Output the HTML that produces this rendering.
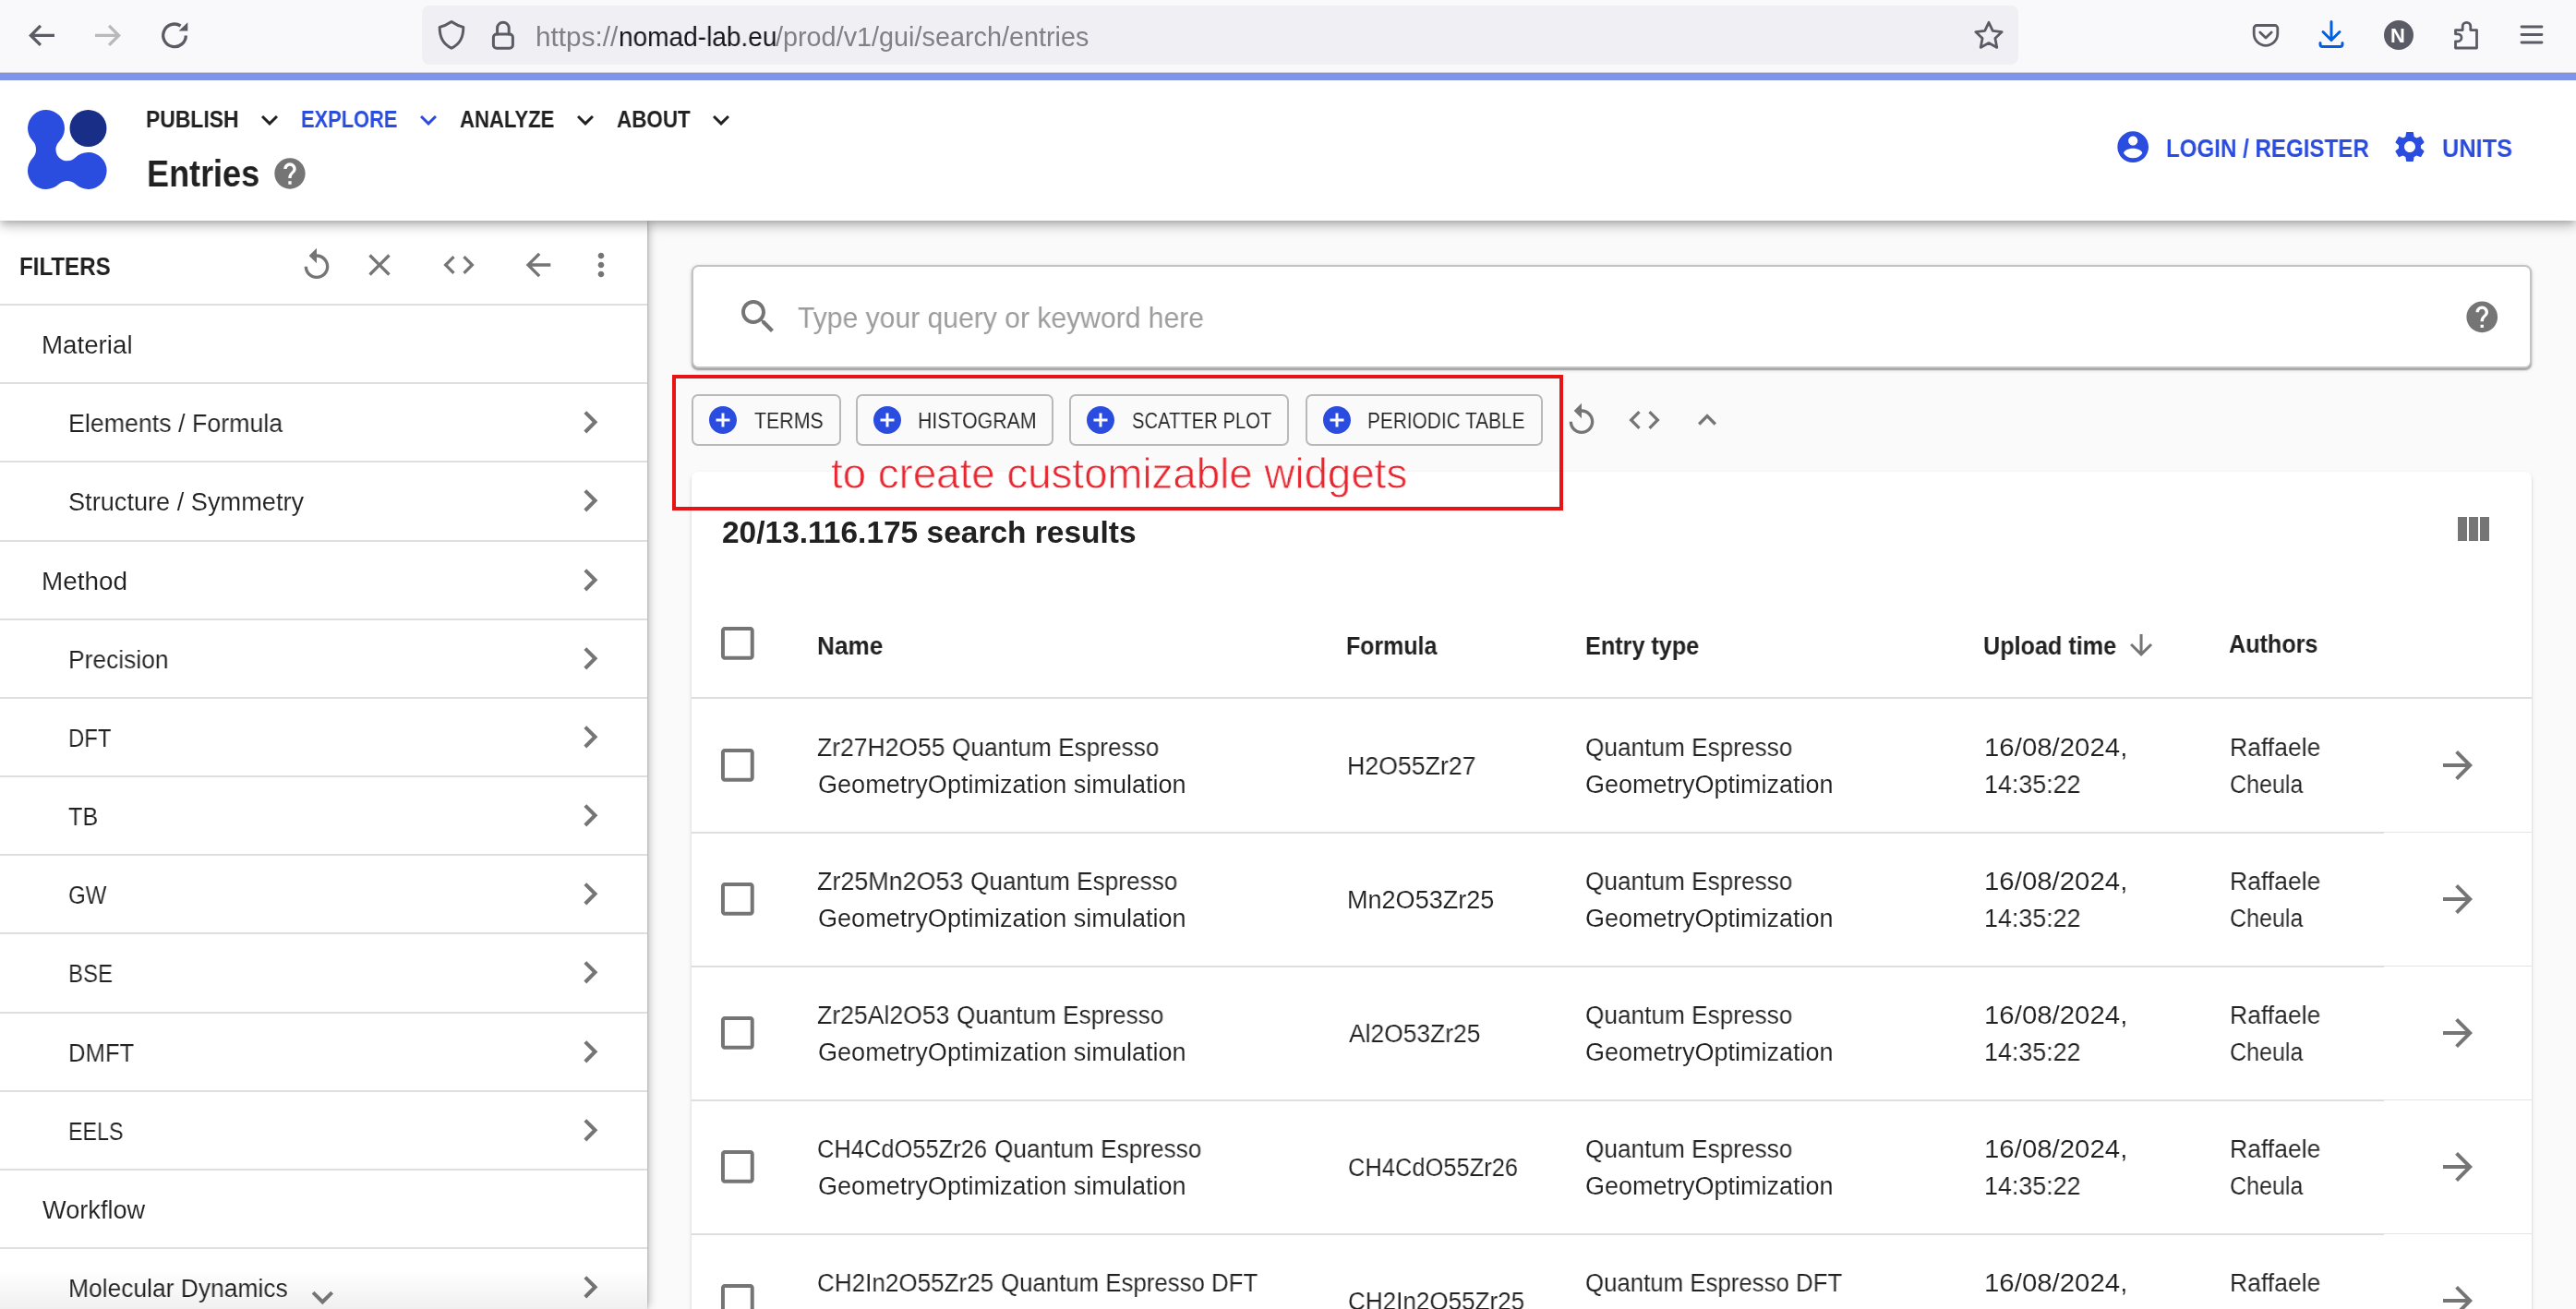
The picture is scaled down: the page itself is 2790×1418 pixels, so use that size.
<!DOCTYPE html>
<html lang="en"><head><meta charset="utf-8"><title>NOMAD - Entries</title>
<style>
html,body{margin:0;padding:0;background:#fafafa}
body{width:2790px;height:1418px;position:relative;overflow:hidden;font-family:"Liberation Sans", sans-serif}
main,aside,header,section,div,svg,span{position:absolute;display:block}
main,aside,header,section{left:0;top:0;width:0;height:0}
.t{white-space:pre;transform-origin:0 50%;will-change:transform}
.u{color:#15141a}
</style></head><body>
<main>
<div style="left:0px;top:0px;width:2790px;height:1418px;background:#fafafa"></div>
<div style="left:749px;top:511px;width:1993px;height:920px;background:#fff;border-radius:7px 7px 0 0;box-shadow:0 2px 2px -1px rgba(0,0,0,.18),0 2px 2px rgba(0,0,0,.12),0 2px 5px rgba(0,0,0,.1)"></div>
<span class="t" id="t0" style="left:781.87px;top:558px;font-size:32.6px;line-height:37px;color:#212121;font-weight:700;transform:scaleX(1.0276);">20/13.116.175 search results</span>
<svg style="left:2654.2px;top:550.2px" width="48" height="48" viewBox="0 0 24 24"><path fill="#757575" d="M10 18h5V5h-5v13zm-6 0h5V5H4v13zM16 5v13h5V5h-5z"/></svg>
<svg style="left:775.15px;top:673.15px" width="47.7" height="47.7" viewBox="0 0 24 24"><path fill="#757575" d="M19 5v14H5V5h14m0-2H5c-1.1 0-2 .9-2 2v14c0 1.1.9 2 2 2h14c1.1 0 2-.9 2-2V5c0-1.1-.9-2-2-2z"/></svg>
<span class="t" id="t1" style="left:884.88px;top:684px;font-size:27.2px;line-height:31px;color:#212121;font-weight:700;transform:scaleX(0.9620);">Name</span>
<span class="t" id="t2" style="left:1458.37px;top:684px;font-size:27.2px;line-height:31px;color:#212121;font-weight:700;transform:scaleX(0.9170);">Formula</span>
<span class="t" id="t3" style="left:1717.15px;top:684px;font-size:27.2px;line-height:31px;color:#212121;font-weight:700;transform:scaleX(0.9269);">Entry type</span>
<span class="t" id="t4" style="left:2147.85px;top:684px;font-size:27.2px;line-height:31px;color:#212121;font-weight:700;transform:scaleX(0.9261);">Upload time</span>
<svg style="left:2300.9px;top:681px" width="36.1" height="36.1" viewBox="0 0 24 24"><path fill="#757575" d="M20 12l-1.41-1.41L13 16.17V4h-2v12.17l-5.58-5.59L4 12l8 8 8-8z"/></svg>
<span class="t" id="t5" style="left:2413.97px;top:682px;font-size:27.2px;line-height:31px;color:#212121;font-weight:700;transform:scaleX(0.9255);">Authors</span>
<div style="left:749px;top:755px;width:1993px;height:2px;background:#dedede"></div>
<svg style="left:775.15px;top:805.15px" width="47.7" height="47.7" viewBox="0 0 24 24"><path fill="#757575" d="M19 5v14H5V5h14m0-2H5c-1.1 0-2 .9-2 2v14c0 1.1.9 2 2 2h14c1.1 0 2-.9 2-2V5c0-1.1-.9-2-2-2z"/></svg>
<span class="t" id="t6" style="left:885.02px;top:795px;font-size:27px;line-height:30px;color:#212121;transform:scaleX(0.9820);-webkit-text-stroke:0.12px #fff;">Zr27H2O55</span>
<span class="t" id="t7" style="left:1031.23px;top:795px;font-size:27px;line-height:30px;color:#212121;transform:scaleX(0.9712);-webkit-text-stroke:0.12px #fff;">Quantum Espresso</span>
<span class="t" id="t8" style="left:885.5px;top:835px;font-size:27px;line-height:30px;color:#212121;transform:scaleX(1.0025);-webkit-text-stroke:0.12px #fff;">GeometryOptimization simulation</span>
<span class="t" id="t9" style="left:1458.72px;top:815px;font-size:27px;line-height:30px;color:#212121;transform:scaleX(0.9891);-webkit-text-stroke:0.12px #fff;">H2O55Zr27</span>
<span class="t" id="t10" style="left:1717.23px;top:795px;font-size:27px;line-height:30px;color:#212121;transform:scaleX(0.9712);-webkit-text-stroke:0.12px #fff;">Quantum Espresso</span>
<span class="t" id="t11" style="left:1717.4px;top:835px;font-size:27px;line-height:30px;color:#212121;-webkit-text-stroke:0.12px #fff;">GeometryOptimization</span>
<span class="t" id="t12" style="left:2148.72px;top:795px;font-size:27px;line-height:30px;color:#212121;transform:scaleX(1.0891);-webkit-text-stroke:0.12px #fff;">16/08/2024,</span>
<span class="t" id="t13" style="left:2148.91px;top:835px;font-size:27px;line-height:30px;color:#212121;transform:scaleX(0.9951);-webkit-text-stroke:0.12px #fff;">14:35:22</span>
<span class="t" id="t14" style="left:2414.73px;top:795px;font-size:27px;line-height:30px;color:#212121;transform:scaleX(0.9835);-webkit-text-stroke:0.12px #fff;">Raffaele</span>
<span class="t" id="t15" style="left:2415.17px;top:835px;font-size:27px;line-height:30px;color:#212121;transform:scaleX(0.9286);-webkit-text-stroke:0.12px #fff;">Cheula</span>
<svg style="left:2638px;top:805px" width="48" height="48" viewBox="0 0 24 24"><path fill="#757575" d="M12 4l-1.41 1.41L16.17 11H4v2h12.17l-5.58 5.59L12 20l8-8z"/></svg>
<div style="left:749px;top:901px;width:1833px;height:2px;background:#dedede"></div>
<div style="left:2582px;top:901px;width:160px;height:1px;background:#e4e4e4"></div>
<svg style="left:775.15px;top:950.15px" width="47.7" height="47.7" viewBox="0 0 24 24"><path fill="#757575" d="M19 5v14H5V5h14m0-2H5c-1.1 0-2 .9-2 2v14c0 1.1.9 2 2 2h14c1.1 0 2-.9 2-2V5c0-1.1-.9-2-2-2z"/></svg>
<span class="t" id="t16" style="left:885px;top:940px;font-size:27px;line-height:30px;color:#212121;transform:scaleX(0.9955);-webkit-text-stroke:0.12px #fff;">Zr25Mn2O53</span>
<span class="t" id="t17" style="left:1051.03px;top:940px;font-size:27px;line-height:30px;color:#212121;transform:scaleX(0.9712);-webkit-text-stroke:0.12px #fff;">Quantum Espresso</span>
<span class="t" id="t18" style="left:885.5px;top:980px;font-size:27px;line-height:30px;color:#212121;transform:scaleX(1.0025);-webkit-text-stroke:0.12px #fff;">GeometryOptimization simulation</span>
<span class="t" id="t19" style="left:1458.7px;top:960px;font-size:27px;line-height:30px;color:#212121;transform:scaleX(1.0019);-webkit-text-stroke:0.12px #fff;">Mn2O53Zr25</span>
<span class="t" id="t20" style="left:1717.23px;top:940px;font-size:27px;line-height:30px;color:#212121;transform:scaleX(0.9712);-webkit-text-stroke:0.12px #fff;">Quantum Espresso</span>
<span class="t" id="t21" style="left:1717.4px;top:980px;font-size:27px;line-height:30px;color:#212121;-webkit-text-stroke:0.12px #fff;">GeometryOptimization</span>
<span class="t" id="t22" style="left:2148.72px;top:940px;font-size:27px;line-height:30px;color:#212121;transform:scaleX(1.0891);-webkit-text-stroke:0.12px #fff;">16/08/2024,</span>
<span class="t" id="t23" style="left:2148.91px;top:980px;font-size:27px;line-height:30px;color:#212121;transform:scaleX(0.9951);-webkit-text-stroke:0.12px #fff;">14:35:22</span>
<span class="t" id="t24" style="left:2414.73px;top:940px;font-size:27px;line-height:30px;color:#212121;transform:scaleX(0.9835);-webkit-text-stroke:0.12px #fff;">Raffaele</span>
<span class="t" id="t25" style="left:2415.17px;top:980px;font-size:27px;line-height:30px;color:#212121;transform:scaleX(0.9286);-webkit-text-stroke:0.12px #fff;">Cheula</span>
<svg style="left:2638px;top:950px" width="48" height="48" viewBox="0 0 24 24"><path fill="#757575" d="M12 4l-1.41 1.41L16.17 11H4v2h12.17l-5.58 5.59L12 20l8-8z"/></svg>
<div style="left:749px;top:1046px;width:1833px;height:2px;background:#dedede"></div>
<div style="left:2582px;top:1046px;width:160px;height:1px;background:#e4e4e4"></div>
<svg style="left:775.15px;top:1095.15px" width="47.7" height="47.7" viewBox="0 0 24 24"><path fill="#757575" d="M19 5v14H5V5h14m0-2H5c-1.1 0-2 .9-2 2v14c0 1.1.9 2 2 2h14c1.1 0 2-.9 2-2V5c0-1.1-.9-2-2-2z"/></svg>
<span class="t" id="t26" style="left:885.01px;top:1085px;font-size:27px;line-height:30px;color:#212121;transform:scaleX(0.9853);-webkit-text-stroke:0.12px #fff;">Zr25Al2O53</span>
<span class="t" id="t27" style="left:1035.63px;top:1085px;font-size:27px;line-height:30px;color:#212121;transform:scaleX(0.9712);-webkit-text-stroke:0.12px #fff;">Quantum Espresso</span>
<span class="t" id="t28" style="left:885.5px;top:1125px;font-size:27px;line-height:30px;color:#212121;transform:scaleX(1.0025);-webkit-text-stroke:0.12px #fff;">GeometryOptimization simulation</span>
<span class="t" id="t29" style="left:1460.7px;top:1105px;font-size:27px;line-height:30px;color:#212121;transform:scaleX(0.9785);-webkit-text-stroke:0.12px #fff;">Al2O53Zr25</span>
<span class="t" id="t30" style="left:1717.23px;top:1085px;font-size:27px;line-height:30px;color:#212121;transform:scaleX(0.9712);-webkit-text-stroke:0.12px #fff;">Quantum Espresso</span>
<span class="t" id="t31" style="left:1717.4px;top:1125px;font-size:27px;line-height:30px;color:#212121;-webkit-text-stroke:0.12px #fff;">GeometryOptimization</span>
<span class="t" id="t32" style="left:2148.72px;top:1085px;font-size:27px;line-height:30px;color:#212121;transform:scaleX(1.0891);-webkit-text-stroke:0.12px #fff;">16/08/2024,</span>
<span class="t" id="t33" style="left:2148.91px;top:1125px;font-size:27px;line-height:30px;color:#212121;transform:scaleX(0.9951);-webkit-text-stroke:0.12px #fff;">14:35:22</span>
<span class="t" id="t34" style="left:2414.73px;top:1085px;font-size:27px;line-height:30px;color:#212121;transform:scaleX(0.9835);-webkit-text-stroke:0.12px #fff;">Raffaele</span>
<span class="t" id="t35" style="left:2415.17px;top:1125px;font-size:27px;line-height:30px;color:#212121;transform:scaleX(0.9286);-webkit-text-stroke:0.12px #fff;">Cheula</span>
<svg style="left:2638px;top:1095px" width="48" height="48" viewBox="0 0 24 24"><path fill="#757575" d="M12 4l-1.41 1.41L16.17 11H4v2h12.17l-5.58 5.59L12 20l8-8z"/></svg>
<div style="left:749px;top:1191px;width:1833px;height:2px;background:#dedede"></div>
<div style="left:2582px;top:1191px;width:160px;height:1px;background:#e4e4e4"></div>
<svg style="left:775.15px;top:1240.15px" width="47.7" height="47.7" viewBox="0 0 24 24"><path fill="#757575" d="M19 5v14H5V5h14m0-2H5c-1.1 0-2 .9-2 2v14c0 1.1.9 2 2 2h14c1.1 0 2-.9 2-2V5c0-1.1-.9-2-2-2z"/></svg>
<span class="t" id="t36" style="left:885.06px;top:1230px;font-size:27px;line-height:30px;color:#212121;transform:scaleX(0.9435);-webkit-text-stroke:0.12px #fff;">CH4CdO55Zr26</span>
<span class="t" id="t37" style="left:1076.83px;top:1230px;font-size:27px;line-height:30px;color:#212121;transform:scaleX(0.9712);-webkit-text-stroke:0.12px #fff;">Quantum Espresso</span>
<span class="t" id="t38" style="left:885.5px;top:1270px;font-size:27px;line-height:30px;color:#212121;transform:scaleX(1.0025);-webkit-text-stroke:0.12px #fff;">GeometryOptimization simulation</span>
<span class="t" id="t39" style="left:1459.76px;top:1250px;font-size:27px;line-height:30px;color:#212121;transform:scaleX(0.9435);-webkit-text-stroke:0.12px #fff;">CH4CdO55Zr26</span>
<span class="t" id="t40" style="left:1717.23px;top:1230px;font-size:27px;line-height:30px;color:#212121;transform:scaleX(0.9712);-webkit-text-stroke:0.12px #fff;">Quantum Espresso</span>
<span class="t" id="t41" style="left:1717.4px;top:1270px;font-size:27px;line-height:30px;color:#212121;-webkit-text-stroke:0.12px #fff;">GeometryOptimization</span>
<span class="t" id="t42" style="left:2148.72px;top:1230px;font-size:27px;line-height:30px;color:#212121;transform:scaleX(1.0891);-webkit-text-stroke:0.12px #fff;">16/08/2024,</span>
<span class="t" id="t43" style="left:2148.91px;top:1270px;font-size:27px;line-height:30px;color:#212121;transform:scaleX(0.9951);-webkit-text-stroke:0.12px #fff;">14:35:22</span>
<span class="t" id="t44" style="left:2414.73px;top:1230px;font-size:27px;line-height:30px;color:#212121;transform:scaleX(0.9835);-webkit-text-stroke:0.12px #fff;">Raffaele</span>
<span class="t" id="t45" style="left:2415.17px;top:1270px;font-size:27px;line-height:30px;color:#212121;transform:scaleX(0.9286);-webkit-text-stroke:0.12px #fff;">Cheula</span>
<svg style="left:2638px;top:1240px" width="48" height="48" viewBox="0 0 24 24"><path fill="#757575" d="M12 4l-1.41 1.41L16.17 11H4v2h12.17l-5.58 5.59L12 20l8-8z"/></svg>
<div style="left:749px;top:1336px;width:1833px;height:2px;background:#dedede"></div>
<div style="left:2582px;top:1336px;width:160px;height:1px;background:#e4e4e4"></div>
<svg style="left:775.15px;top:1385.15px" width="47.7" height="47.7" viewBox="0 0 24 24"><path fill="#757575" d="M19 5v14H5V5h14m0-2H5c-1.1 0-2 .9-2 2v14c0 1.1.9 2 2 2h14c1.1 0 2-.9 2-2V5c0-1.1-.9-2-2-2z"/></svg>
<span class="t" id="t46" style="left:885.03px;top:1375px;font-size:27px;line-height:30px;color:#212121;transform:scaleX(0.9653);-webkit-text-stroke:0.12px #fff;">CH2In2O55Zr25</span>
<span class="t" id="t47" style="left:1083.94px;top:1375px;font-size:27px;line-height:30px;color:#212121;transform:scaleX(0.9561);-webkit-text-stroke:0.12px #fff;">Quantum Espresso DFT</span>
<span class="t" id="t48" style="left:885.6px;top:1415px;font-size:27px;line-height:30px;color:#212121;transform:scaleX(0.9000);-webkit-text-stroke:0.12px #fff;">SinglePoint simulation</span>
<span class="t" id="t49" style="left:1459.73px;top:1395px;font-size:27px;line-height:30px;color:#212121;transform:scaleX(0.9653);-webkit-text-stroke:0.12px #fff;">CH2In2O55Zr25</span>
<span class="t" id="t50" style="left:1717.24px;top:1375px;font-size:27px;line-height:30px;color:#212121;transform:scaleX(0.9561);-webkit-text-stroke:0.12px #fff;">Quantum Espresso DFT</span>
<span class="t" id="t51" style="left:1717.5px;top:1415px;font-size:27px;line-height:30px;color:#212121;transform:scaleX(0.9000);-webkit-text-stroke:0.12px #fff;">SinglePoint</span>
<span class="t" id="t52" style="left:2148.72px;top:1375px;font-size:27px;line-height:30px;color:#212121;transform:scaleX(1.0891);-webkit-text-stroke:0.12px #fff;">16/08/2024,</span>
<span class="t" id="t53" style="left:2148.91px;top:1415px;font-size:27px;line-height:30px;color:#212121;transform:scaleX(0.9951);-webkit-text-stroke:0.12px #fff;">14:35:22</span>
<span class="t" id="t54" style="left:2414.73px;top:1375px;font-size:27px;line-height:30px;color:#212121;transform:scaleX(0.9835);-webkit-text-stroke:0.12px #fff;">Raffaele</span>
<span class="t" id="t55" style="left:2415.17px;top:1415px;font-size:27px;line-height:30px;color:#212121;transform:scaleX(0.9286);-webkit-text-stroke:0.12px #fff;">Cheula</span>
<svg style="left:2638px;top:1385px" width="48" height="48" viewBox="0 0 24 24"><path fill="#757575" d="M12 4l-1.41 1.41L16.17 11H4v2h12.17l-5.58 5.59L12 20l8-8z"/></svg>
<div style="left:749px;top:1481px;width:1833px;height:2px;background:#dedede"></div>
<div style="left:2582px;top:1481px;width:160px;height:1px;background:#e4e4e4"></div>
<div style="left:748.9px;top:287px;width:1993.1px;height:111.9px;background:#fff;border-radius:7.5px;box-shadow:0 2px 1.5px -0.5px rgba(0,0,0,.3),0 2px 5px rgba(0,0,0,.1),0 0 4px rgba(0,0,0,.06);border:2px solid #c3c3c3;box-sizing:border-box"></div>
<svg style="left:797.1px;top:318.8px" width="48" height="48" viewBox="0 0 24 24"><path fill="#757575" d="M15.5 14h-.79l-.28-.27C15.41 12.59 16 11.11 16 9.5 16 5.91 13.09 3 9.5 3S3 5.91 3 9.5 5.91 16 9.5 16c1.61 0 3.09-.59 4.23-1.57l.27.28v.79l5 4.99L20.49 19l-4.99-5zm-6 0C7.01 14 5 11.99 5 9.5S7.01 5 9.5 5 14 7.01 14 9.5 11.99 14 9.5 14z"/></svg>
<span class="t" id="t56" style="left:864.25px;top:326px;font-size:31.6px;line-height:36px;color:#9c9c9c;transform:scaleX(0.9527);">Type your query or keyword here</span>
<svg style="left:2667.75px;top:322.65px" width="40.5" height="40.5" viewBox="0 0 24 24"><path fill="#757575" d="M12 2C6.48 2 2 6.48 2 12s4.48 10 10 10 10-4.48 10-10S17.52 2 12 2zm1 17h-2v-2h2v2zm2.07-7.75l-.9.92C13.45 12.9 13 13.5 13 15h-2v-.5c0-1.1.45-2.1 1.17-2.83l1.24-1.26c.37-.36.59-.86.59-1.41 0-1.1-.9-2-2-2s-2 .9-2 2H8c0-2.21 1.79-4 4-4s4 1.79 4 4c0 .88-.36 1.68-.93 2.25z"/></svg>
<div style="left:749.1px;top:427.4px;width:161.7px;height:55.4px;border:2px solid #b9b9b9;border-radius:7px;box-sizing:border-box;background:#fafafa"></div>
<svg style="left:764.8px;top:437px" width="36" height="36" viewBox="0 0 24 24"><path fill="#2a4cdf" d="M12 2C6.48 2 2 6.48 2 12s4.48 10 10 10 10-4.48 10-10S17.52 2 12 2zm5 11h-4v4h-2v-4H7v-2h4V7h2v4h4v2z"/></svg>
<span class="t" id="t57" style="left:817px;top:442px;font-size:24.7px;line-height:27px;color:#212121;transform:scaleX(0.8635);-webkit-text-stroke:0.12px #fafafa;">TERMS</span>
<div style="left:927.3px;top:427.4px;width:214.1px;height:55.4px;border:2px solid #b9b9b9;border-radius:7px;box-sizing:border-box;background:#fafafa"></div>
<svg style="left:943px;top:437px" width="36" height="36" viewBox="0 0 24 24"><path fill="#2a4cdf" d="M12 2C6.48 2 2 6.48 2 12s4.48 10 10 10 10-4.48 10-10S17.52 2 12 2zm5 11h-4v4h-2v-4H7v-2h4V7h2v4h4v2z"/></svg>
<span class="t" id="t58" style="left:994.08px;top:442px;font-size:24.7px;line-height:27px;color:#212121;transform:scaleX(0.8621);-webkit-text-stroke:0.12px #fafafa;">HISTOGRAM</span>
<div style="left:1158.4px;top:427.4px;width:237.9px;height:55.4px;border:2px solid #b9b9b9;border-radius:7px;box-sizing:border-box;background:#fafafa"></div>
<svg style="left:1174.1px;top:437px" width="36" height="36" viewBox="0 0 24 24"><path fill="#2a4cdf" d="M12 2C6.48 2 2 6.48 2 12s4.48 10 10 10 10-4.48 10-10S17.52 2 12 2zm5 11h-4v4h-2v-4H7v-2h4V7h2v4h4v2z"/></svg>
<span class="t" id="t59" style="left:1225.58px;top:442px;font-size:24.7px;line-height:27px;color:#212121;transform:scaleX(0.8186);-webkit-text-stroke:0.12px #fafafa;">SCATTER PLOT</span>
<div style="left:1414.2px;top:427.4px;width:256.5px;height:55.4px;border:2px solid #b9b9b9;border-radius:7px;box-sizing:border-box;background:#fafafa"></div>
<svg style="left:1429.9px;top:437px" width="36" height="36" viewBox="0 0 24 24"><path fill="#2a4cdf" d="M12 2C6.48 2 2 6.48 2 12s4.48 10 10 10 10-4.48 10-10S17.52 2 12 2zm5 11h-4v4h-2v-4H7v-2h4V7h2v4h4v2z"/></svg>
<span class="t" id="t60" style="left:1480.71px;top:442px;font-size:24.7px;line-height:27px;color:#212121;transform:scaleX(0.8432);-webkit-text-stroke:0.12px #fafafa;">PERIODIC TABLE</span>
<svg style="left:1693.1px;top:435.2px" width="40" height="40" viewBox="0 0 24 24"><path fill="#757575" d="M12 5V1L7 6l5 5V7c3.31 0 6 2.69 6 6s-2.69 6-6 6-6-2.69-6-6H4c0 4.42 3.58 8 8 8s8-3.58 8-8-3.58-8-8-8z"/></svg>
<svg style="left:1761.1px;top:435px" width="40" height="40" viewBox="0 0 24 24"><path fill="#757575" d="M9.4 16.6L4.8 12l4.6-4.6L8 6l-6 6 6 6 1.4-1.4zm5.2 0l4.6-4.6-4.6-4.6L16 6l6 6-6 6-1.4-1.4z"/></svg>
<svg style="left:1829px;top:435px" width="40" height="40" viewBox="0 0 24 24"><path fill="#757575" d="M12 8l-6 6 1.41 1.41L12 10.83l4.59 4.58L18 14z"/></svg>
<div style="left:728px;top:406px;width:965px;height:146.8px;border:4.2px solid #e61414;box-sizing:border-box"></div>
<span class="t" id="t61" style="left:900.13px;top:486px;font-size:47px;line-height:53px;color:#e9262f;transform:scaleX(0.9713);-webkit-text-stroke:0.8px #fcfcfc;">to create customizable widgets</span>
</main>
<aside>
<div style="left:0px;top:239px;width:701px;height:1179px;background:#fff;box-shadow:4px 0 9px -2px rgba(0,0,0,.25),1px 0 2px rgba(0,0,0,.12)"></div>
<span class="t" id="t62" style="left:21.1px;top:272px;font-size:28.3px;line-height:32px;color:#212121;font-weight:700;transform:scaleX(0.8522);">FILTERS</span>
<svg style="left:322.9px;top:267.3px" width="40" height="40" viewBox="0 0 24 24"><path fill="#757575" d="M12 5V1L7 6l5 5V7c3.31 0 6 2.69 6 6s-2.69 6-6 6-6-2.69-6-6H4c0 4.42 3.58 8 8 8s8-3.58 8-8-3.58-8-8-8z"/></svg>
<svg style="left:391px;top:266.8px" width="40" height="40" viewBox="0 0 24 24"><path fill="#757575" d="M19 6.41L17.59 5 12 10.59 6.41 5 5 6.41 10.59 12 5 17.59 6.41 19 12 13.41 17.59 19 19 17.59 13.41 12z"/></svg>
<svg style="left:476.8px;top:266.9px" width="40" height="40" viewBox="0 0 24 24"><path fill="#757575" d="M9.4 16.6L4.8 12l4.6-4.6L8 6l-6 6 6 6 1.4-1.4zm5.2 0l4.6-4.6-4.6-4.6L16 6l6 6-6 6-1.4-1.4z"/></svg>
<svg style="left:563.2px;top:267px" width="40" height="40" viewBox="0 0 24 24"><path fill="#757575" d="M20 11H7.83l5.59-5.59L12 4l-8 8 8 8 1.41-1.41L7.83 13H20v-2z"/></svg>
<svg style="left:631px;top:267px" width="40" height="40" viewBox="0 0 24 24"><path fill="#757575" d="M12 8c1.1 0 2-.9 2-2s-.9-2-2-2-2 .9-2 2 .9 2 2 2zm0 2c-1.1 0-2 .9-2 2s.9 2 2 2 2-.9 2-2-.9-2-2-2zm0 6c-1.1 0-2 .9-2 2s.9 2 2 2 2-.9 2-2-.9-2-2-2z"/></svg>
<div style="left:0px;top:329px;width:701px;height:1.8px;background:#dfdfdf"></div>
<span class="t" id="t63" style="left:44.85px;top:359px;font-size:27px;line-height:30px;color:#212121;transform:scaleX(1.0261);-webkit-text-stroke:0.12px #fff;">Material</span>
<div style="left:0px;top:414px;width:701px;height:1.8px;background:#dfdfdf"></div>
<span class="t" id="t64" style="left:73.82px;top:444px;font-size:27px;line-height:30px;color:#212121;transform:scaleX(0.9922);-webkit-text-stroke:0.12px #fff;">Elements / Formula</span>
<svg style="left:615.2px;top:433.3px" width="48.6" height="48.6" viewBox="0 0 24 24"><path fill="#757575" d="M10 6L8.59 7.41 13.17 12l-4.58 4.59L10 18l6-6z"/></svg>
<div style="left:0px;top:499px;width:701px;height:1.8px;background:#dfdfdf"></div>
<span class="t" id="t65" style="left:73.99px;top:529px;font-size:27px;line-height:30px;color:#212121;transform:scaleX(1.0060);-webkit-text-stroke:0.12px #fff;">Structure / Symmetry</span>
<svg style="left:615.2px;top:518.3px" width="48.6" height="48.6" viewBox="0 0 24 24"><path fill="#757575" d="M10 6L8.59 7.41 13.17 12l-4.58 4.59L10 18l6-6z"/></svg>
<div style="left:0px;top:585px;width:701px;height:1.8px;background:#dfdfdf"></div>
<span class="t" id="t66" style="left:44.83px;top:615px;font-size:27px;line-height:30px;color:#212121;transform:scaleX(1.0326);-webkit-text-stroke:0.12px #fff;">Method</span>
<svg style="left:615.2px;top:604.3px" width="48.6" height="48.6" viewBox="0 0 24 24"><path fill="#757575" d="M10 6L8.59 7.41 13.17 12l-4.58 4.59L10 18l6-6z"/></svg>
<div style="left:0px;top:670px;width:701px;height:1.8px;background:#dfdfdf"></div>
<span class="t" id="t67" style="left:73.84px;top:700px;font-size:27px;line-height:30px;color:#212121;transform:scaleX(0.9776);-webkit-text-stroke:0.12px #fff;">Precision</span>
<svg style="left:615.2px;top:689.3px" width="48.6" height="48.6" viewBox="0 0 24 24"><path fill="#757575" d="M10 6L8.59 7.41 13.17 12l-4.58 4.59L10 18l6-6z"/></svg>
<div style="left:0px;top:755px;width:701px;height:1.8px;background:#dfdfdf"></div>
<span class="t" id="t68" style="left:74.03px;top:785px;font-size:27px;line-height:30px;color:#212121;transform:scaleX(0.8860);-webkit-text-stroke:0.12px #fff;">DFT</span>
<svg style="left:615.2px;top:774.3px" width="48.6" height="48.6" viewBox="0 0 24 24"><path fill="#757575" d="M10 6L8.59 7.41 13.17 12l-4.58 4.59L10 18l6-6z"/></svg>
<div style="left:0px;top:840px;width:701px;height:1.8px;background:#dfdfdf"></div>
<span class="t" id="t69" style="left:73.87px;top:870px;font-size:27px;line-height:30px;color:#212121;transform:scaleX(0.9344);-webkit-text-stroke:0.12px #fff;">TB</span>
<svg style="left:615.2px;top:859.3px" width="48.6" height="48.6" viewBox="0 0 24 24"><path fill="#757575" d="M10 6L8.59 7.41 13.17 12l-4.58 4.59L10 18l6-6z"/></svg>
<div style="left:0px;top:925px;width:701px;height:1.8px;background:#dfdfdf"></div>
<span class="t" id="t70" style="left:74.31px;top:955px;font-size:27px;line-height:30px;color:#212121;transform:scaleX(0.8889);-webkit-text-stroke:0.12px #fff;">GW</span>
<svg style="left:615.2px;top:944.3px" width="48.6" height="48.6" viewBox="0 0 24 24"><path fill="#757575" d="M10 6L8.59 7.41 13.17 12l-4.58 4.59L10 18l6-6z"/></svg>
<div style="left:0px;top:1010px;width:701px;height:1.8px;background:#dfdfdf"></div>
<span class="t" id="t71" style="left:74.02px;top:1040px;font-size:27px;line-height:30px;color:#212121;transform:scaleX(0.8902);-webkit-text-stroke:0.12px #fff;">BSE</span>
<svg style="left:615.2px;top:1029.3px" width="48.6" height="48.6" viewBox="0 0 24 24"><path fill="#757575" d="M10 6L8.59 7.41 13.17 12l-4.58 4.59L10 18l6-6z"/></svg>
<div style="left:0px;top:1096px;width:701px;height:1.8px;background:#dfdfdf"></div>
<span class="t" id="t72" style="left:73.9px;top:1126px;font-size:27px;line-height:30px;color:#212121;transform:scaleX(0.9500);-webkit-text-stroke:0.12px #fff;">DMFT</span>
<svg style="left:615.2px;top:1115.3px" width="48.6" height="48.6" viewBox="0 0 24 24"><path fill="#757575" d="M10 6L8.59 7.41 13.17 12l-4.58 4.59L10 18l6-6z"/></svg>
<div style="left:0px;top:1181px;width:701px;height:1.8px;background:#dfdfdf"></div>
<span class="t" id="t73" style="left:74.08px;top:1211px;font-size:27px;line-height:30px;color:#212121;transform:scaleX(0.8621);-webkit-text-stroke:0.12px #fff;">EELS</span>
<svg style="left:615.2px;top:1200.3px" width="48.6" height="48.6" viewBox="0 0 24 24"><path fill="#757575" d="M10 6L8.59 7.41 13.17 12l-4.58 4.59L10 18l6-6z"/></svg>
<div style="left:0px;top:1266px;width:701px;height:1.8px;background:#dfdfdf"></div>
<span class="t" id="t74" style="left:46.3px;top:1296px;font-size:27px;line-height:30px;color:#212121;transform:scaleX(1.0063);-webkit-text-stroke:0.12px #fff;">Workflow</span>
<div style="left:0px;top:1351px;width:701px;height:1.8px;background:#dfdfdf"></div>
<span class="t" id="t75" style="left:73.84px;top:1381px;font-size:27px;line-height:30px;color:#212121;transform:scaleX(0.9783);-webkit-text-stroke:0.12px #fff;">Molecular Dynamics</span>
<svg style="left:615.2px;top:1370.3px" width="48.6" height="48.6" viewBox="0 0 24 24"><path fill="#757575" d="M10 6L8.59 7.41 13.17 12l-4.58 4.59L10 18l6-6z"/></svg>
<div style="left:0px;top:1376px;width:701px;height:42px;background:linear-gradient(to bottom,rgba(0,0,0,0),rgba(0,0,0,.06))"></div>
<svg style="left:325.55px;top:1381.75px" width="46.7" height="46.7" viewBox="0 0 24 24"><path fill="#757575" d="M16.59 8.59L12 13.17 7.41 8.59 6 10l6 6 6-6z"/></svg>
</aside>
<header>
<div style="left:0px;top:86.5px;width:2790px;height:152.8px;background:#fff;box-shadow:0 3px 7px -2px rgba(0,0,0,.2),0 7px 10px rgba(0,0,0,.14),0 2px 19px rgba(0,0,0,.12)"></div>
<svg style="left:0;top:86px" width="160" height="150" viewBox="0 86 160 150"><path fill="#2a4cdf" d="M35.33 152.6A20 20 0 1 1 64.11 153.17A12.31 12.31 0 0 0 81.52 170.7A20 20 0 1 1 81.94 199.51A13.38 13.38 0 0 0 63.66 199.51A20 20 0 0 1 35.33 171.3A13.76 13.76 0 0 0 35.33 152.6Z"/><circle cx="95.5" cy="139" r="20" fill="#192e86"/></svg>
<span class="t" id="t76" style="left:158.2px;top:115px;font-size:25.5px;line-height:28px;color:#212121;font-weight:700;transform:scaleX(0.8981);">PUBLISH</span>
<svg style="left:274.3px;top:111.5px" width="36" height="36" viewBox="0 0 24 24"><path fill="#212121" d="M16.59 8.59L12 13.17 7.41 8.59 6 10l6 6 6-6z"/></svg>
<span class="t" id="t77" style="left:325.89px;top:115px;font-size:25.5px;line-height:28px;color:#2a4cdf;font-weight:700;transform:scaleX(0.8571);">EXPLORE</span>
<svg style="left:446px;top:111.5px" width="36" height="36" viewBox="0 0 24 24"><path fill="#2a4cdf" d="M16.59 8.59L12 13.17 7.41 8.59 6 10l6 6 6-6z"/></svg>
<span class="t" id="t78" style="left:497.93px;top:115px;font-size:25.5px;line-height:28px;color:#212121;font-weight:700;transform:scaleX(0.8672);">ANALYZE</span>
<svg style="left:615.9px;top:111.5px" width="36" height="36" viewBox="0 0 24 24"><path fill="#212121" d="M16.59 8.59L12 13.17 7.41 8.59 6 10l6 6 6-6z"/></svg>
<span class="t" id="t79" style="left:667.52px;top:115px;font-size:25.5px;line-height:28px;color:#212121;font-weight:700;transform:scaleX(0.8798);">ABOUT</span>
<svg style="left:763px;top:111.5px" width="36" height="36" viewBox="0 0 24 24"><path fill="#212121" d="M16.59 8.59L12 13.17 7.41 8.59 6 10l6 6 6-6z"/></svg>
<span class="t" id="t80" style="left:158.82px;top:166px;font-size:40.3px;line-height:45px;color:#212121;font-weight:700;transform:scaleX(0.8939);">Entries</span>
<svg style="left:294px;top:168px" width="40" height="40" viewBox="0 0 24 24"><path fill="#757575" d="M12 2C6.48 2 2 6.48 2 12s4.48 10 10 10 10-4.48 10-10S17.52 2 12 2zm1 17h-2v-2h2v2zm2.07-7.75l-.9.92C13.45 12.9 13 13.5 13 15h-2v-.5c0-1.1.45-2.1 1.17-2.83l1.24-1.26c.37-.36.59-.86.59-1.41 0-1.1-.9-2-2-2s-2 .9-2 2H8c0-2.21 1.79-4 4-4s4 1.79 4 4c0 .88-.36 1.68-.93 2.25z"/></svg>
<svg style="left:2289.8px;top:138.5px" width="40.4" height="40.4" viewBox="0 0 24 24"><path fill="#2a4cdf" d="M12 2C6.48 2 2 6.48 2 12s4.48 10 10 10 10-4.48 10-10S17.52 2 12 2zm0 3c1.66 0 3 1.34 3 3s-1.34 3-3 3-3-1.34-3-3 1.34-3 3-3zm0 14.2c-2.5 0-4.71-1.28-6-3.22.03-1.99 4-3.08 6-3.08 1.99 0 5.97 1.09 6 3.08-1.29 1.94-3.5 3.22-6 3.22z"/></svg>
<span class="t" id="t81" style="left:2346.19px;top:144px;font-size:28.3px;line-height:32px;color:#2a4cdf;font-weight:700;transform:scaleX(0.8525);">LOGIN / REGISTER</span>
<svg style="left:2589.8px;top:138.8px" width="40" height="40" viewBox="0 0 24 24"><path fill="#2a4cdf" d="M19.14 12.94c.04-.3.06-.61.06-.94 0-.32-.02-.64-.07-.94l2.03-1.58c.18-.14.23-.41.12-.61l-1.92-3.32c-.12-.22-.37-.29-.59-.22l-2.39.96c-.5-.38-1.03-.7-1.62-.94l-.36-2.54c-.04-.24-.24-.41-.48-.41h-3.84c-.24 0-.43.17-.47.41l-.36 2.54c-.59.24-1.13.57-1.62.94l-2.39-.96c-.22-.08-.47 0-.59.22L2.74 8.87c-.12.21-.08.47.12.61l2.03 1.58c-.05.3-.09.63-.09.94s.02.64.07.94l-2.03 1.58c-.18.14-.23.41-.12.61l1.92 3.32c.12.22.37.29.59.22l2.39-.96c.5.38 1.03.7 1.62.94l.36 2.54c.05.24.24.41.48.41h3.84c.24 0 .44-.17.47-.41l.36-2.54c.59-.24 1.13-.56 1.62-.94l2.39.96c.22.08.47 0 .59-.22l1.92-3.32c.12-.22.07-.47-.12-.61l-2.01-1.58zM12 15.6c-1.98 0-3.6-1.62-3.6-3.6s1.62-3.6 3.6-3.6 3.6 1.62 3.6 3.6-1.62 3.6-3.6 3.6z"/></svg>
<span class="t" id="t82" style="left:2645.21px;top:144px;font-size:28.3px;line-height:32px;color:#2a4cdf;font-weight:700;transform:scaleX(0.8963);">UNITS</span>
</header>
<section>
<div style="left:0px;top:0px;width:2790px;height:78.4px;background:#f9f9fb"></div>
<div style="left:0px;top:77.6px;width:2790px;height:1px;background:#cfcfd8"></div>
<div style="left:0px;top:78.5px;width:2790px;height:8.2px;background:#7e93ea"></div>
<div style="left:457px;top:6px;width:1728.7px;height:63.6px;background:#f0f0f4;border-radius:8px"></div>
<svg style="left:0;top:0" width="2790" height="78" viewBox="0 0 2790 78" fill="none" stroke-linecap="butt" stroke-linejoin="miter">
<g stroke="#5b5b66" stroke-width="3.3">
<path d="M59 38.4H33.4M43.9 27.9L33.4 38.4L43.9 48.9"/>
<path d="M201.3 38.4A12.3 12.3 0 1 1 195.6 28"/>
<path d="M203.3 24.2V33.5H193.6Z" fill="#5b5b66" stroke="none"/>
</g>
<g stroke="#b8b8bd" stroke-width="3.3"><path d="M103 38.4H128.6M118.1 27.9L128.6 38.4L118.1 48.9"/></g>
<g stroke="#5b5b66" stroke-width="3" stroke-linejoin="round" stroke-linecap="round">
<path d="M489 23.6C484 27 480 28.6 476.2 29.4C476 40 479 47.5 489 52.2C499 47.5 502 40 501.8 29.4C498 28.6 494 27 489 23.6Z"/>
<rect x="534.4" y="37" width="21" height="15.2" rx="3.5"/>
<path d="M538.6 37V30.5A6.3 6.3 0 0 1 551.2 30.500V37"/>
<path d="M2154 24.300L2158.300 33.400L2168.200 34.600L2160.900 41.500L2162.800 51.400L2154 46.600L2145.200 51.400L2147.100 41.500L2139.800 34.600L2149.700 33.400Z" stroke-width="2.800"/>
<path d="M2444.200 27.500H2463.800A3 3 0 0 1 2466.800 30.500V36.500A12.800 12.800 0 0 1 2441.200 36.500V30.500A3 3 0 0 1 2444.200 27.500Z" stroke-width="2.800"/>
<path d="M2447.800 35L2454 41L2460.200 35" stroke-width="2.800"/>
<path d="M2671.500 24.300A4.300 4.300 0 0 1 2675.800 28.600V32.600H2682.500V52H2659.500V44.800H2662A4 4 0 0 0 2662 36.800H2659.500V32.600H2667.200V28.600A4.300 4.300 0 0 1 2671.500 24.300Z" stroke-width="2.800"/>
<path d="M2731 29H2753M2731 37.500H2753M2731 46H2753" stroke-width="2.800"/>
</g>
<g stroke="#0060df" stroke-width="3" stroke-linecap="round" stroke-linejoin="round">
<path d="M2525 23.500V42.500M2516 34.500L2525 43.500L2534 34.500"/>
<path d="M2513 46.500V48A2.500 2.500 0 0 0 2515.500 50.500H2534.500A2.500 2.500 0 0 0 2537 48V46.500"/>
</g>
</svg>
<span class="t" id="t83" style="left:580.13px;top:24px;font-size:28.8px;line-height:32px;color:#808087;transform:scaleX(1.0333);">https://</span>
<span class="t" id="t84" style="left:669.55px;top:24px;font-size:28.8px;line-height:32px;color:#15141a;transform:scaleX(0.9738);">nomad-lab.eu</span>
<span class="t" id="t85" style="left:840.2px;top:24px;font-size:28.8px;line-height:32px;color:#808087;">/prod/v1/gui/search/entries</span>
<div style="left:2581.7px;top:21.8px;width:32px;height:32px;background:#5b5b66;border-radius:50%"></div>
<span class="t" id="t86" style="left:2588.8px;top:26px;font-size:22px;line-height:25px;color:#fff;font-weight:700;">N</span>
</section>
</body></html>
